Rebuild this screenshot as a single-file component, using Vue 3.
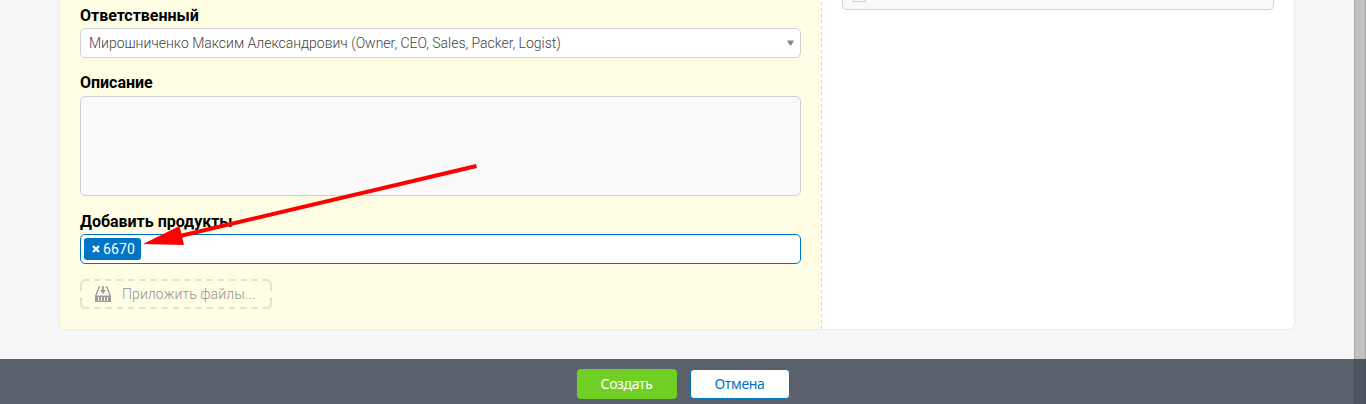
<script setup>
const owner = 'Мирошниченко Максим Александрович (Owner, CEO, Sales, Packer, Logist)'
</script>

<template>
  <div class="page">
    <div class="body">
      <main class="card">
        <section class="main">
          <label class="label">Ответственный</label>
          <div class="select">
            <span>{{ owner }}</span>
            <svg class="caret" width="7" height="6" viewBox="0 0 7 6"><path d="M0 .5h7L4 5.500H3z" fill="#858585" /></svg>
          </div>
          <label class="label second">Описание</label>
          <div class="textarea"></div>
          <label class="label third">Добавить продукты</label>
          <div class="tags">
            <span class="tag">
              <svg width="8" height="8" viewBox="0 0 8 8"><path d="M1 1l6 6M7 1L1 7" stroke="#fff" stroke-width="2.4" /></svg>
              <span>6670</span>
            </span>
          </div>
          <div class="attach">
            <svg class="dash" width="192" height="30" viewBox="0 0 192 30" fill="none" stroke="#e4e2cf" stroke-width="2">
              <path d="M1 12V6q0-5 5-5h3M183 1h3q5 0 5 5v6M191 18v6q0 5-5 5h-3M9 29H6q-5 0-5-5v-6" />
              <path d="M14.250 1H180M14.250 29H180" stroke-dasharray="6 5.25" />
            </svg>
            <svg class="tray" width="16" height="16" viewBox="0 0 16 16" fill="none" stroke="#9d9d9d">
              <path d="M5.500 1.200H4L.7 10M10.500 1.200H12L15.300 10" stroke-width="1.300" />
              <path d="M8 0v5" stroke-width="1.800" />
              <path d="M5 4h6L8 8z" fill="#9d9d9d" stroke="none" />
              <path d="M0 9.500h16V16H0z" fill="#9d9d9d" stroke="none" />
              <path d="M3.500 11v4M6.500 11v4M9.500 11v4M12.500 11v4" stroke="#fffde3" />
            </svg>
            <span>Приложить файлы...</span>
          </div>
        </section>
        <section class="side">
          <div class="side-field"><i class="check"></i></div>
        </section>
      </main>
    </div>
    <div class="scroll"></div>
    <footer class="footer">
      <button class="btn create">Создать</button>
      <button class="btn cancel">Отмена</button>
    </footer>
    <svg class="arrow" width="1366" height="404" viewBox="0 0 1366 404">
      <path d="M476.500 166L180 236" stroke="#f00" stroke-width="4" />
      <path d="M143 244L179.500 226L184 245z" fill="#f00" />
    </svg>
  </div>
</template>

<style>
body { margin: 0; overflow: hidden; }
</style>

<style scoped>
.page { position: relative; display: flex; width: 1366px; height: 404px; overflow: hidden; background: #f5f7f9; font-family: Roboto, sans-serif; box-sizing: border-box; }
.page * { box-sizing: border-box; }
.body { flex: 1; padding-left: 60px; }
.card { display: flex; width: 1234px; height: 329px; background: #fff; border-radius: 0 0 5px 5px; box-shadow: 0 0 2px rgba(0, 0, 0, .16); }
.main { width: 761px; padding: 6px 20px 0; background: #fffde3; }
.label { display: block; height: 22px; font-size: 16px; line-height: 19px; font-weight: 700; letter-spacing: -.02px; color: #000; }
.second { margin-top: 15px; height: 23px; }
.third { margin-top: 16px; height: 22px; }
.select { display: flex; align-items: center; justify-content: space-between; width: 721px; height: 30px; padding: 0 6px 0 8px; border: 1px solid #d0d0d0; border-radius: 5px; background: #fff; color: #444; font-size: 14px; font-weight: 300; letter-spacing: -.02px; white-space: nowrap; }
.textarea { width: 721px; height: 100px; border: 1px solid #d0d0d0; border-radius: 5px; background: #f9f9f9; }
.tags { width: 721px; height: 30px; padding: 3px; border: 1px solid #0074c5; border-radius: 5px; background: #fff; }
.tag { display: flex; align-items: center; width: 57px; height: 22px; padding-left: 8px; gap: 3px; border-radius: 3px; background: #0074c5; color: #fff; font-size: 14px; letter-spacing: .15px; line-height: 22px; }
.attach { position: relative; display: flex; align-items: center; width: 192px; height: 30px; margin-top: 15px; padding-left: 15px; color: #949494; font-size: 14px; font-weight: 300; letter-spacing: .1px; }
.dash { position: absolute; left: 0; top: 0; }
.tray { margin-right: 11px; }
.side { flex: 1; padding-left: 21px; border-radius: 0 0 5px 0; background: linear-gradient(to bottom, #d2d2cc 0 3px, transparent 3px) 0 2px / 1px 6px repeat-y; }
.side-field { width: 432px; height: 10px; padding-left: 10px; border: 1px solid #d0d0d0; border-top: 0; border-radius: 0 0 5px 5px; background: #f9f9f9; }
.check { display: block; width: 13px; height: 2px; border: 1px solid #d0d0d0; border-top: 0; }
.scroll { width: 12px; background: #c1c1c1; border: solid #a6a6a6; border-width: 0 1px; }
.footer { position: absolute; left: 0; right: 0; bottom: 0; display: flex; justify-content: center; gap: 13px; height: 45px; padding-top: 10px; background: rgba(43, 51, 63, .765); }
.btn { width: 100px; height: 30px; padding: 0; border: 0; border-radius: 4px; font: 14px/28px "Noto Sans", sans-serif; letter-spacing: -.35px; }
.create { background: #6fcf25; color: #fff; }
.cancel { background: #fff; color: #0074c5; border: 1px solid #0074c5; letter-spacing: -.3px; }
.arrow { position: absolute; left: 0; top: 0; }
</style>
